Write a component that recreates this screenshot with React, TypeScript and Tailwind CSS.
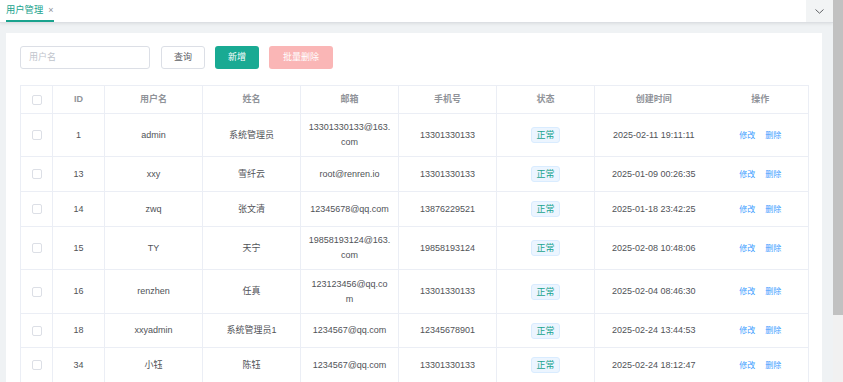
import React from 'react';

interface UserRow {
  id: number;
  username: string;
  name: string;
  email: string[];
  mobile: string;
  createdAt: string;
  height: string;
}

const rows: UserRow[] = [
  { id: 1, username: 'admin', name: '系统管理员', email: ['13301330133@163.', 'com'], mobile: '13301330133', createdAt: '2025-02-11 19:11:11', height: 'h-[43px]' },
  { id: 13, username: 'xxy', name: '雪纤云', email: ['root@renren.io'], mobile: '13301330133', createdAt: '2025-01-09 00:26:35', height: 'h-[35px]' },
  { id: 14, username: 'zwq', name: '张文清', email: ['12345678@qq.com'], mobile: '13876229521', createdAt: '2025-01-18 23:42:25', height: 'h-[35px]' },
  { id: 15, username: 'TY', name: '天宁', email: ['19858193124@163.', 'com'], mobile: '19858193124', createdAt: '2025-02-08 10:48:06', height: 'h-[43px]' },
  { id: 16, username: 'renzhen', name: '任真', email: ['123123456@qq.co', 'm'], mobile: '13301330133', createdAt: '2025-02-04 08:46:30', height: 'h-[44px]' },
  { id: 18, username: 'xxyadmin', name: '系统管理员1', email: ['1234567@qq.com'], mobile: '12345678901', createdAt: '2025-02-24 13:44:53', height: 'h-[34px]' },
  { id: 34, username: '小钰', name: '陈钰', email: ['1234567@qq.com'], mobile: '13301330133', createdAt: '2025-02-24 18:12:47', height: 'h-[35px]' },
];

const Checkbox = () => (
  <span className="inline-block w-[10px] h-[10px] border border-[#dcdfe6] rounded-[2px] bg-white align-middle" />
);

export default function App() {
  const th = 'font-semibold text-[#909399] text-center border-b border-r border-[#ebeef5] p-0';
  const td = 'text-center border-b border-r border-[#ebeef5] p-0';

  return (
    <div
      className="flex w-screen h-screen overflow-hidden bg-[#eff2f4] text-[9px] leading-[15px]"
      style={{ fontFamily: '"Liberation Sans", "Noto Sans CJK SC", sans-serif' }}
    >
      <div className="flex-1 flex flex-col min-w-0">
        {/* Tab bar */}
        <div className="h-[23px] shrink-0 flex bg-white border-b border-[#dcdfe3] shadow-[0_1px_3px_rgba(0,0,0,0.08)]">
          <div className="flex-1 pl-[6px]">
            <div className="inline-flex items-center h-full gap-[5px] border-b-2 border-[#1aa38e] w-[48px]">
              <span className="text-[#1aa38e] text-[9.3px]">用户管理</span>
              <span className="text-[#909399] text-[9px]">×</span>
            </div>
          </div>
          <div className="w-[27px] bg-[#f2f4f5] flex items-center justify-center">
            <svg width="9" height="5" viewBox="0 0 9 5" fill="none">
              <path d="M0.5 0.5L4.5 4.2L8.5 0.5" stroke="#606266" strokeWidth="1" />
            </svg>
          </div>
        </div>

        {/* Content */}
        <div className="flex-1 pt-[10px] pl-[6px] pr-[11px] overflow-hidden">
          <div className="bg-white pt-[13px] px-[14px] pb-4">
            {/* Toolbar */}
            <div className="flex items-center gap-[10px]">
              <div className="w-[130px] h-[23px] border border-[#dcdfe6] rounded-[3px] flex items-center pl-[8px] text-[#c0c4cc]">
                用户名
              </div>
              <button className="ml-px w-[44px] h-[23px] border border-[#dcdfe6] rounded-[3px] bg-white text-[#606266]">查询</button>
              <button className="w-[44px] h-[23px] rounded-[3px] bg-[#19aa93] text-white">新增</button>
              <button className="w-[64px] h-[23px] rounded-[3px] bg-[#fab6b6] text-white">批量删除</button>
            </div>

            {/* Table */}
            <table className="mt-[16px] w-[788px] table-fixed border-collapse border-t border-l border-[#ebeef5]">
              <colgroup>
                <col className="w-[32px]" />
                <col className="w-[52px]" />
                <col className="w-[98px]" />
                <col className="w-[98px]" />
                <col className="w-[98px]" />
                <col className="w-[98px]" />
                <col className="w-[98px]" />
                <col className="w-[118px]" />
                <col className="w-[96px]" />
              </colgroup>
              <thead>
                <tr className="h-[28px]">
                  <th className={th}><Checkbox /></th>
                  <th className={th}>ID</th>
                  <th className={th}>用户名</th>
                  <th className={th}>姓名</th>
                  <th className={th}>邮箱</th>
                  <th className={th}>手机号</th>
                  <th className={th}>状态</th>
                  <th className={`${th} border-r-0`}>创建时间</th>
                  <th className={th}>操作</th>
                </tr>
              </thead>
              <tbody className="text-[#505257]">
                {rows.map((r) => (
                  <tr key={r.id} className={r.height}>
                    <td className={td}><Checkbox /></td>
                    <td className={td}>{r.id}</td>
                    <td className={td}>{r.username}</td>
                    <td className={td}>{r.name}</td>
                    <td className={td}>
                      {r.email.map((line, i) => (
                        <div key={i}>{line}</div>
                      ))}
                    </td>
                    <td className={td}>{r.mobile}</td>
                    <td className={td}>
                      <span className="inline-block h-[16px] leading-[14px] px-[4px] rounded-[3px] border border-[#d9ecff] bg-[#ecf5ff] text-[#1aa38e]">
                        正常
                      </span>
                    </td>
                    <td className={`${td} border-r-0`}>{r.createdAt}</td>
                    <td className={td}>
                      <span className="inline-flex gap-[10px] text-[#409eff] text-[8px]">
                        <span>修改</span>
                        <span>删除</span>
                      </span>
                    </td>
                  </tr>
                ))}
              </tbody>
            </table>
          </div>
        </div>
      </div>

      {/* Page scrollbar */}
      <div className="w-[10px] shrink-0 flex flex-col bg-[#f1f1f1]">
        <div className="h-[315px] bg-[#c1c1c1]" />
      </div>
    </div>
  );
}
